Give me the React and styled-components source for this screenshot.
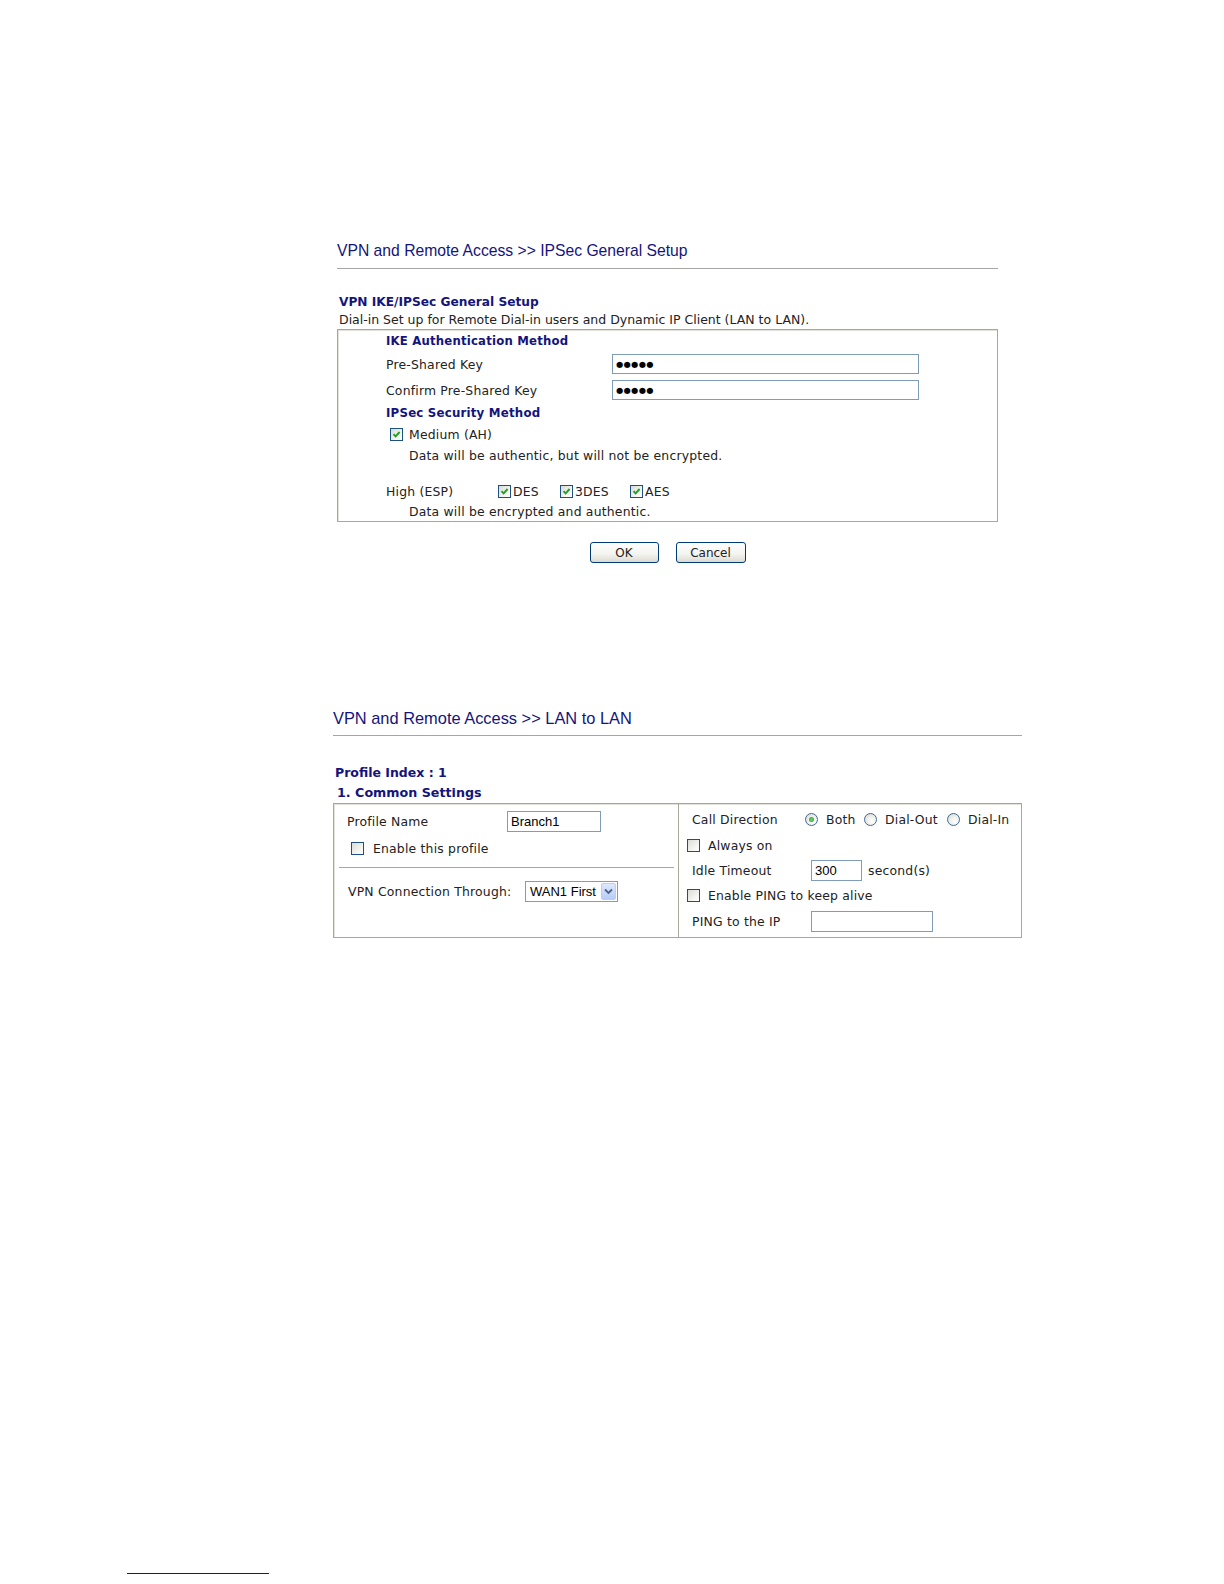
import React from 'react';
import styled, { createGlobalStyle } from 'styled-components';

const GlobalStyle = createGlobalStyle`
  html, body { margin: 0; padding: 0; background: #ffffff; }
  body { font-family: "DejaVu Sans", Verdana, sans-serif; color: #222222; }
`;

const Page = styled.div`
  width: 1224px;
  height: 1584px;
  box-sizing: border-box;
  padding-top: 241px;
  display: flex;
  flex-direction: column;
`;

const Section = styled.section`
  margin-left: ${(p) => p.$left}px;
  width: ${(p) => p.$width}px;
  margin-top: ${(p) => p.$top || 0}px;
`;

const Title = styled.h1`
  margin: 0;
  font-family: "Liberation Sans", Arial, sans-serif;
  font-weight: normal;
  font-size: ${(p) => p.$size}px;
  line-height: 20px;
  color: #14147c;
  padding-bottom: 7px;
  border-bottom: 1px solid #a6a6a6;
`;

const Heading = styled.div`
  font-weight: bold;
  font-size: ${(p) => p.$size || 12}px;
  line-height: 18px;
  color: #14147c;
  margin-top: ${(p) => p.$top || 0}px;
  margin-left: ${(p) => p.$indent || 0}px;
`;

const Text = styled.div`
  font-size: 12.5px;
  line-height: 18px;
  color: #222222;
  margin-left: 2px;
`;

const Box = styled.div`
  border: 1px solid #a7a79b;
  box-shadow: inset 1px 1px 0 #e2e2da;
  padding-left: 48px;
  padding-right: 20px;
  display: flex;
  flex-direction: column;
`;

const Row = styled.div`
  height: ${(p) => p.$h}px;
  display: flex;
  align-items: center;
  padding-left: ${(p) => p.$indent || 0}px;
  font-size: 12.4px;
  letter-spacing: 0.2px;
  color: #222222;
  flex-shrink: 0;
`;

const Label = styled.span`
  width: ${(p) => p.$w}px;
  flex-shrink: 0;
  white-space: nowrap;
`;

const Input = styled.div`
  width: ${(p) => p.$w}px;
  height: ${(p) => p.$h || 20}px;
  box-sizing: border-box;
  border: 1px solid #7f9db9;
  background: #ffffff;
  display: flex;
  align-items: center;
  padding-left: 3px;
  font-family: "Liberation Sans", Arial, sans-serif;
  font-size: 13px;
  letter-spacing: 0;
  color: #000000;
  flex-shrink: 0;
`;

const Dots = styled.span`
  font-family: "DejaVu Sans", sans-serif;
  font-size: 8.2px;
  letter-spacing: 0.4px;
  color: #000000;
`;

const Unit = styled.span`
  margin-left: 6px;
`;

const CheckWrap = styled.span`
  width: 13px;
  height: 13px;
  box-sizing: border-box;
  border: 1px solid #1c5180;
  background: linear-gradient(135deg, #dcdcd6 0%, #f6f6f3 70%, #ffffff 100%);
  display: inline-flex;
  align-items: center;
  justify-content: center;
  flex-shrink: 0;
  margin-right: ${(p) => p.$gap || 0}px;
`;

const Check = ({ checked, gap }) => (
  <CheckWrap $gap={gap}>
    {checked && (
      <svg width="9" height="9" viewBox="0 0 9 9">
        <path d="M1.5 4.2 L3.6 6.4 L7.6 2" fill="none" stroke="#21a121" strokeWidth="1.9" />
      </svg>
    )}
  </CheckWrap>
);

const RadioWrap = styled.span`
  width: 13px;
  height: 13px;
  box-sizing: border-box;
  border-radius: 50%;
  border: 1px solid #3f6a92;
  background: radial-gradient(circle at 65% 65%, #ffffff 0%, #eeeee9 50%, #d4d4cd 100%);
  display: inline-flex;
  align-items: center;
  justify-content: center;
  flex-shrink: 0;
  margin-right: 8px;
  &::after {
    content: '';
    width: 5px;
    height: 5px;
    border-radius: 50%;
    background: ${(p) => (p.$on ? 'radial-gradient(circle, #6ad46a 0%, #2a9a2a 100%)' : 'transparent')};
  }
`;

const Group = styled.span`
  display: inline-flex;
  align-items: center;
  width: ${(p) => (p.$w ? `${p.$w}px` : 'auto')};
  flex-shrink: 0;
`;

const Buttons = styled.div`
  display: flex;
  justify-content: center;
  gap: 17px;
  margin-top: 20px;
`;

const Button = styled.button`
  width: ${(p) => p.$w}px;
  height: 21px;
  padding: 0;
  border: 1px solid #003c74;
  border-radius: 3px;
  background: linear-gradient(#ffffff 0%, #f3f3ef 60%, #dcdad0 100%);
  font-family: "DejaVu Sans", Verdana, sans-serif;
  font-size: 12px;
  color: #222222;
`;

const Box2 = styled.div`
  margin-top: 1px;
  height: 135px;
  box-sizing: border-box;
  border: 1px solid #a7a79b;
  box-shadow: inset 1px 1px 0 #e2e2da;
  display: grid;
  grid-template-columns: 344px 1fr;
`;

const Col = styled.div`
  display: flex;
  flex-direction: column;
  border-left: ${(p) => (p.$divided ? '1px solid #a7a79b' : 'none')};
  padding-top: ${(p) => p.$pt || 0}px;
`;

const HRule = styled.div`
  height: 1px;
  background: #a7a79b;
  margin: 7px 4px 0 5px;
`;

const Select = styled.div`
  width: 93px;
  height: 21px;
  box-sizing: border-box;
  border: 1px solid #7f9db9;
  display: flex;
  align-items: center;
  justify-content: space-between;
  padding: 0 1px 0 4px;
  font-family: "Liberation Sans", Arial, sans-serif;
  font-size: 13px;
  letter-spacing: 0;
  color: #000000;
`;

const SelectArrow = styled.span`
  width: 15px;
  height: 17px;
  box-sizing: border-box;
  border: 1px solid #b9cdf6;
  border-radius: 2px;
  background: linear-gradient(#dfe9fe, #b6cbf8);
  display: inline-flex;
  align-items: center;
  justify-content: center;
`;

const Footer = styled.div`
  margin-top: auto;
  margin-bottom: 10px;
  margin-left: 127px;
  width: 142px;
  height: 1px;
  background: #1010a0;
`;

export default function App() {
  return (
    <>
      <GlobalStyle />
      <Page>
        <Section $left={337} $width={661}>
          <Title $size={15.7}>VPN and Remote Access &gt;&gt; IPSec General Setup</Title>
          <Heading $top={24} $size={12.2} $indent={2}>VPN IKE/IPSec General Setup</Heading>
          <Text>Dial-in Set up for Remote Dial-in users and Dynamic IP Client (LAN to LAN).</Text>
          <Box>
            <Row $h={21}>
              <Heading $size={11.7}>IKE Authentication Method</Heading>
            </Row>
            <Row $h={26}>
              <Label $w={226}>Pre-Shared Key</Label>
              <Input $w={307}><Dots>●●●●●</Dots></Input>
            </Row>
            <Row $h={26}>
              <Label $w={226}>Confirm Pre-Shared Key</Label>
              <Input $w={307}><Dots>●●●●●</Dots></Input>
            </Row>
            <Row $h={20}>
              <Heading $size={11.8}>IPSec Security Method</Heading>
            </Row>
            <Row $h={23} $indent={4}>
              <Check checked gap={6} />
              Medium (AH)
            </Row>
            <Row $h={18} $indent={23}>Data will be authentic, but will not be encrypted.</Row>
            <Row $h={16} />
            <Row $h={22}>
              <Label $w={112}>High (ESP)</Label>
              <Group $w={62}><Check checked gap={2} />DES</Group>
              <Group $w={70}><Check checked gap={2} />3DES</Group>
              <Group><Check checked gap={2} />AES</Group>
            </Row>
            <Row $h={19} $indent={23}>Data will be encrypted and authentic.</Row>
          </Box>
          <Buttons>
            <Button $w={69}>OK</Button>
            <Button $w={70}>Cancel</Button>
          </Buttons>
        </Section>

        <Section $left={333} $width={689} $top={145}>
          <Title $size={16.4}>VPN and Remote Access &gt;&gt; LAN to LAN</Title>
          <Heading $top={28} $size={12.5} $indent={2}>Profile Index : 1</Heading>
          <Heading $top={2} $size={12.7} $indent={4}>1. Common Settings</Heading>
          <Box2>
            <Col $pt={3}>
              <Row $h={29} $indent={13}>
                <Label $w={160}>Profile Name</Label>
                <Input $w={94} $h={21}>Branch1</Input>
              </Row>
              <Row $h={24} $indent={17}>
                <Check gap={9} />
                Enable this profile
              </Row>
              <HRule />
              <Row $h={46} $indent={14}>
                <Label $w={177}>VPN Connection Through:</Label>
                <Select>
                  WAN1 First
                  <SelectArrow>
                    <svg width="9" height="7" viewBox="0 0 9 7">
                      <path d="M1 1.5 L4.5 5 L8 1.5" fill="none" stroke="#4d6185" strokeWidth="1.8" />
                    </svg>
                  </SelectArrow>
                </Select>
              </Row>
            </Col>
            <Col $divided $pt={1}>
              <Row $h={28} $indent={13}>
                <Label $w={113}>Call Direction</Label>
                <RadioWrap $on />
                <Group $w={38}>Both</Group>
                <RadioWrap />
                <Group $w={62}>Dial-Out</Group>
                <RadioWrap />
                <Group>Dial-In</Group>
              </Row>
              <Row $h={24} $indent={8}>
                <Check gap={8} />
                Always on
              </Row>
              <Row $h={26} $indent={13}>
                <Label $w={119}>Idle Timeout</Label>
                <Input $w={51} $h={21}>300</Input>
                <Unit>second(s)</Unit>
              </Row>
              <Row $h={25} $indent={8}>
                <Check gap={8} />
                Enable PING to keep alive
              </Row>
              <Row $h={26} $indent={13}>
                <Label $w={119}>PING to the IP</Label>
                <Input $w={122} $h={21} />
              </Row>
            </Col>
          </Box2>
        </Section>

        <Footer />
      </Page>
    </>
  );
}
